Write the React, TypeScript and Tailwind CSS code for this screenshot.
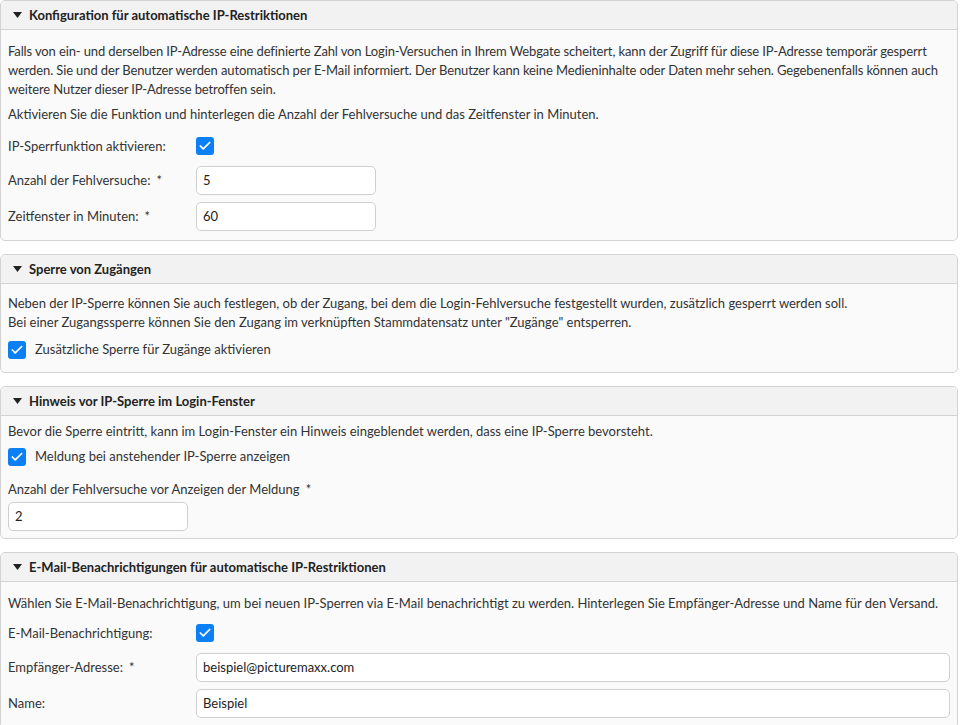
import { Check } from 'lucide-react';
import type { ReactNode } from 'react';

const font = { fontFamily: 'Lato, "Noto Sans", sans-serif' };

function Panel({ title, children }: { title: string; children: ReactNode }) {
  return (
    <section className="border border-[#d3d3d3] rounded-[5px] bg-[#fafafa] overflow-hidden">
      <header className="h-[29px] flex items-center gap-[7px] pl-[12px] bg-[#f2f2f2] border-b border-[#d3d3d3]">
        <svg width="9" height="6" viewBox="0 0 9 6" className="text-[#222]">
          <path d="M0 0h9L4.5 6z" fill="currentColor" />
        </svg>
        <h2 className="font-bold text-[13px] text-[#222]">{title}</h2>
      </header>
      <div className="px-[7px]">{children}</div>
    </section>
  );
}

function Box() {
  return (
    <span className="w-[18px] h-[18px] rounded-[3px] bg-[#0b80f5] flex items-center justify-center shrink-0">
      <Check size={14} strokeWidth={3} className="text-white" />
    </span>
  );
}

function Input({ value, wide }: { value: string; wide?: boolean }) {
  return (
    <div className={`h-[29px] bg-white border border-[#cfcfcf] rounded-[5px] flex items-center px-[6px] text-[13px] text-[#222] ${wide ? 'flex-1' : 'w-[180px]'}`}>
      {value}
    </div>
  );
}

function Row({ label, required, children, h = 'h-[36px]' }: { label: string; required?: boolean; children: ReactNode; h?: string }) {
  return (
    <div className={`flex items-center ${h}`}>
      <div className="w-[188px] shrink-0 text-[13px]">
        {label}
        {required && <span className="ml-[6px]">*</span>}
      </div>
      {children}
    </div>
  );
}

export default function App() {
  return (
    <div className="w-[958px] flex flex-col gap-[13px] text-[#333] text-[13px] leading-[19px]" style={font}>
      <Panel title="Konfiguration für automatische IP-Restriktionen">
        <p className="pt-[12px] tracking-[-0.12px]">
          Falls von ein- und derselben IP-Adresse eine definierte Zahl von Login-Versuchen in Ihrem Webgate scheitert, kann der Zugriff für diese IP-Adresse temporär gesperrt werden. Sie und der Benutzer werden automatisch per E-Mail informiert. Der Benutzer kann keine Medieninhalte oder Daten mehr sehen. Gegebenenfalls können auch weitere Nutzer dieser IP-Adresse betroffen sein.
        </p>
        <p className="pt-[6px]">Aktivieren Sie die Funktion und hinterlegen die Anzahl der Fehlversuche und das Zeitfenster in Minuten.</p>
        <div className="pt-[6px] pb-[6px]">
          <Row label="IP-Sperrfunktion aktivieren:" h="h-[32px]">
            <Box />
          </Row>
          <Row label="Anzahl der Fehlversuche:" required>
            <Input value="5" />
          </Row>
          <Row label="Zeitfenster in Minuten:" required>
            <Input value="60" />
          </Row>
        </div>
      </Panel>

      <Panel title="Sperre von Zugängen">
        <p className="pt-[10px]">
          Neben der IP-Sperre können Sie auch festlegen, ob der Zugang, bei dem die Login-Fehlversuche festgestellt wurden, zusätzlich gesperrt werden soll.
          <br />
          Bei einer Zugangssperre können Sie den Zugang im verknüpften Stammdatensatz unter "Zugänge" entsperren.
        </p>
        <label className="flex items-center gap-[9px] pt-[8px] pb-[13px]">
          <Box />
          Zusätzliche Sperre für Zugänge aktivieren
        </label>
      </Panel>

      <Panel title="Hinweis vor IP-Sperre im Login-Fenster">
        <p className="pt-[6px]">Bevor die Sperre eintritt, kann im Login-Fenster ein Hinweis eingeblendet werden, dass eine IP-Sperre bevorsteht.</p>
        <label className="flex items-center gap-[9px] pt-[6px]">
          <Box />
          Meldung bei anstehender IP-Sperre anzeigen
        </label>
        <div className="pt-[14px]">
          Anzahl der Fehlversuche vor Anzeigen der Meldung<span className="ml-[6px]">*</span>
        </div>
        <div className="pt-[3px] pb-[7px]">
          <Input value="2" />
        </div>
      </Panel>

      <Panel title="E-Mail-Benachrichtigungen für automatische IP-Restriktionen">
        <p className="pt-[12px]">Wählen Sie E-Mail-Benachrichtigung, um bei neuen IP-Sperren via E-Mail benachrichtigt zu werden. Hinterlegen Sie Empfänger-Adresse und Name für den Versand.</p>
        <div className="pt-[4px] pb-[6px]">
          <Row label="E-Mail-Benachrichtigung:" h="h-[32px]">
            <Box />
          </Row>
          <Row label="Empfänger-Adresse:" required>
            <Input value="beispiel@picturemaxx.com" wide />
          </Row>
          <Row label="Name:">
            <Input value="Beispiel" wide />
          </Row>
        </div>
      </Panel>
    </div>
  );
}
